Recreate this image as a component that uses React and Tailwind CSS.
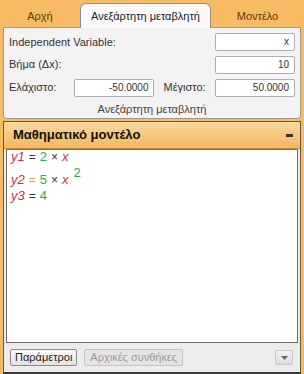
import React from 'react';

const font = { fontFamily: '"Liberation Sans", "DejaVu Sans", sans-serif' };

function Field({ value, className = '' }) {
  return (
    <div className={`h-[18px] bg-white border border-[#abadb3] rounded-[2px] flex items-center justify-end pr-[5px] text-[10px] text-[#333] ${className}`}>
      {value}
    </div>
  );
}

function Op({ children, color = 'text-[#333]' }) {
  return <span className={`text-[12px] mx-[4px] ${color}`}>{children}</span>;
}

export default function App() {
  return (
    <div className="w-[304px] h-[374px] bg-[#f6bb63] flex flex-col overflow-hidden text-[#222]" style={font}>
      {/* tab strip */}
      <div className="h-[28px] flex items-end text-[11px]">
        <div className="w-[80px] h-[24px] flex items-center justify-center text-[#5a3c10]">Αρχή</div>
        <div className="w-[131px] h-[25px] bg-[#fafafa] border border-b-0 border-[#8e8e8e] rounded-t-[6px] flex items-center justify-center text-[#222] relative z-10">
          Ανεξάρτητη μεταβλητή
        </div>
        <div className="flex-1 h-[24px] flex items-center justify-center text-[#5a3c10]">Μοντέλο</div>
      </div>

      {/* independent variable panel */}
      <div className="mx-[3px] -mt-px h-[92px] bg-[#f3f3f3] border border-[#9a9a9a] rounded-b-[3px] px-[5px] pt-[4px] flex flex-col text-[11px] text-[#333]">
        <div className="flex items-center justify-between h-[20px]">
          <span>Independent Variable:</span>
          <Field value="x" className="w-[80px]" />
        </div>
        <div className="flex items-center justify-between h-[20px] mt-[3px]">
          <span>Βήμα (Δx):</span>
          <Field value="10" className="w-[80px]" />
        </div>
        <div className="flex items-center h-[20px] mt-[3px]">
          <span className="w-[65px]">Ελάχιστο:</span>
          <Field value="-50.0000" className="w-[81px]" />
          <span className="ml-[9px] w-[52px]">Μέγιστο:</span>
          <Field value="50.0000" className="w-[80px] ml-auto" />
        </div>
        <div className="text-center mt-[4px] text-[#444]">Ανεξάρτητη μεταβλητή</div>
      </div>

      {/* model panel */}
      <div className="mx-[3px] mt-[2px] flex-1 flex flex-col border border-[#5b5b5b] border-b-[2px] border-b-[#3a3a3a] bg-[#ececec]">
        <div className="h-[27px] bg-gradient-to-b from-[#fbd9a0] to-[#f2b65e] flex items-center justify-between px-[9px] border-b border-[#c88a30]">
          <span className="text-[13px] font-bold text-[#111]">Μαθηματικό μοντέλο</span>
          <span className="w-[7px] h-[3px] bg-[#333] mr-[-2px]" />
        </div>
        <div className="mx-[2px] h-[194px] bg-white border border-[#6a6a6a] px-[4px] text-[13px]">
          <div className="h-[14px] leading-[14px]">
            <span className="italic text-[#cc3344]">y1</span>
            <Op>=</Op>
            <span className="text-[#33aa44]">2</span>
            <Op>×</Op>
            <span className="italic text-[#cc3344]">x</span>
          </div>
          <div className="h-[14px] leading-[14px] mt-[9px] flex items-baseline">
            <span className="italic text-[#cc3344]">y2</span>
            <Op color="text-[#e8a030]">=</Op>
            <span className="text-[#33aa44]">5</span>
            <Op>×</Op>
            <span className="italic text-[#cc3344]">x</span>
            <span className="text-[#33aa44] ml-[5px] -translate-y-[7px]">2</span>
          </div>
          <div className="h-[14px] leading-[14px] mt-[2px]">
            <span className="italic text-[#cc3344]">y3</span>
            <Op>=</Op>
            <span className="text-[#33aa44]">4</span>
          </div>
        </div>
        <div className="flex-1 flex items-center px-[6px] gap-[7px] text-[11px]">
          <div className="h-[17px] px-[4px] flex items-center border border-[#8a8a8a] rounded-[2px] bg-gradient-to-b from-[#fafafa] to-[#e2e2e2] text-[#222]">
            Παράμετροι
          </div>
          <div className="h-[17px] px-[5px] flex items-center border border-[#c4c4c4] rounded-[2px] bg-[#e4e4e4] text-[#9a9a9a]">
            Αρχικές συνθήκες
          </div>
          <div className="ml-auto mr-[1px] w-[18px] h-[15px] flex items-center justify-center border border-[#c8c8c8] rounded-[2px] bg-gradient-to-b from-[#f4f4f4] to-[#dcdcdc]">
            <svg width="7" height="4" viewBox="0 0 7 4"><path d="M0 0h7L3.5 4z" fill="#666" /></svg>
          </div>
        </div>
      </div>
    </div>
  );
}
